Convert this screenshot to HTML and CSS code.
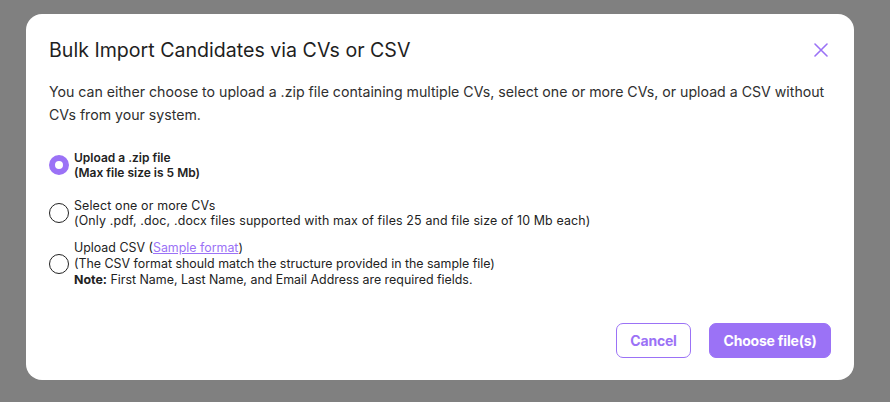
FILE: index.html
```html
<!DOCTYPE html>
<html>
<head>
<meta charset="utf-8">
<link rel="stylesheet" href="styles.css">
</head>
<body>
<div class="modal">
  <div class="header">
    <h1 class="title">Bulk Import Candidates via CVs or CSV</h1>
    <svg class="close" width="14" height="14" viewBox="0 0 14 14"><path d="M1 1L13 13M13 1L1 13" stroke="#9b72f6" stroke-width="1.6" stroke-linecap="round"/></svg>
  </div>
  <p class="desc">You can either choose to upload a .zip file containing multiple CVs, select one or more CVs, or upload a CSV without CVs from your system.</p>
  <div class="options">
    <label class="option opt1">
      <span class="radio checked"></span>
      <span class="otext bold">Upload a .zip file<br>(Max file size is 5 Mb)</span>
    </label>
    <label class="option opt2">
      <span class="radio"></span>
      <span class="otext wide">Select one or more CVs<br>(Only .pdf, .doc, .docx files supported with max of files 25 and file size of 10 Mb each)</span>
    </label>
    <label class="option opt3">
      <span class="radio"></span>
      <span class="otext tall">Upload CSV (<a class="link">Sample format</a>)<br>(The CSV format should match the structure provided in the sample file)<br><b>Note:</b> First Name, Last Name, and Email Address are required fields.</span>
    </label>
  </div>
  <div class="actions">
    <button class="btn outline">Cancel</button>
    <button class="btn primary">Choose file(s)</button>
  </div>
</div>
</body>
</html>
```

FILE: styles.css
```css
* { box-sizing: border-box; }
html, body { margin: 0; padding: 0; }
body {
  width: 890px;
  height: 402px;
  background: #808080;
  font-family: Inter, "Liberation Sans", sans-serif;
  padding: 14px 0 0 26px;
}
.modal {
  width: 828px;
  height: 366px;
  background: #fff;
  border-radius: 16px;
  padding: 22px 23px 22px 23px;
  display: flex;
  flex-direction: column;
}
.header {
  display: flex;
  justify-content: space-between;
  align-items: center;
}
.title {
  margin: 0;
  font-size: 19.6px;
  line-height: 28px;
  font-weight: 400;
  color: #1f1f1f;
}
.close { margin-right: 3px; margin-top: 0; }
.desc {
  margin: 16px 0 0 0;
  font-size: 14.15px;
  line-height: 23px;
  color: #2f2f2f;
}
.options {
  margin-top: 24px;
  display: flex;
  flex-direction: column;
}
.option {
  display: flex;
  align-items: center;
  gap: 5px;
}
.opt2 { margin-top: 18px; }
.opt3 { margin-top: 12px; }
.radio {
  flex: none;
  width: 20px;
  height: 20px;
  border-radius: 50%;
  border: 1.3px solid #222;
  background: #fff;
}
.radio.checked {
  border: 6px solid #9b72f6;
}
.otext {
  font-size: 12.4px;
  line-height: 15px;
  color: #222;
}
.otext.wide { letter-spacing: 0.15px; }
.otext.bold { font-weight: 600; font-size: 12px; }
.otext.tall { line-height: 16px; }
.otext b { font-weight: 700; }
.link {
  color: #9b72f6;
  text-decoration: underline;
}
.actions {
  margin-top: auto;
  display: flex;
  justify-content: flex-end;
  gap: 18px;
}
.btn {
  height: 35px;
  border-radius: 7px;
  font-family: Inter, "Liberation Sans", sans-serif;
  font-size: 14px;
  font-weight: 700;
  letter-spacing: -0.2px;
  padding: 0;
  white-space: nowrap;
  cursor: pointer;
}
.btn.outline {
  width: 75px;
  background: #fff;
  color: #9b72f6;
  border: 1px solid #9b72f6;
}
.btn.primary {
  width: 122px;
  background: #9b72f6;
  color: #fff;
  border: 1px solid #9b72f6;
}
```
